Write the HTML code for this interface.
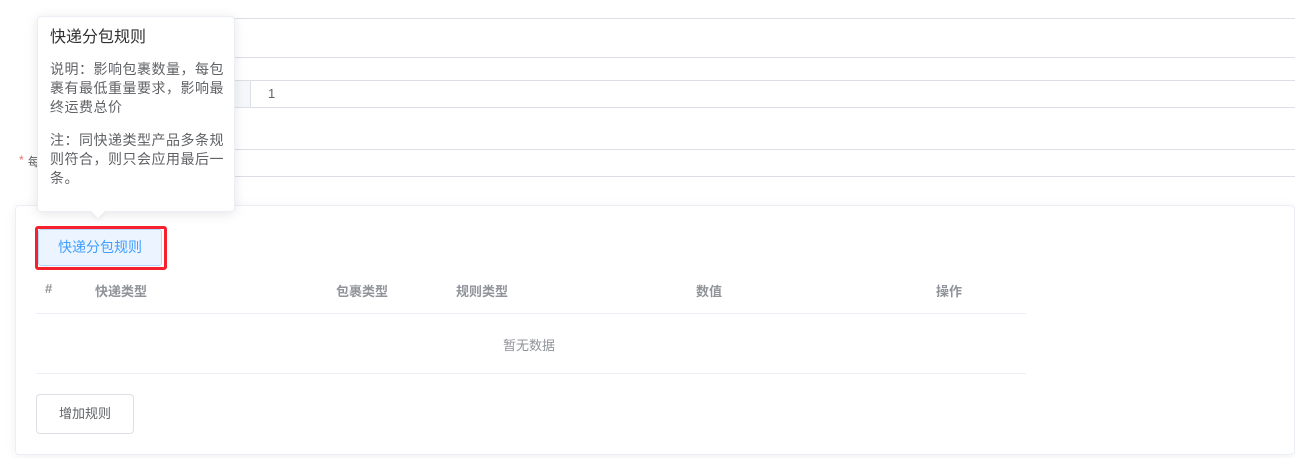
<!DOCTYPE html>
<html><head><meta charset="utf-8"><style>
*{margin:0;padding:0;box-sizing:border-box}
body{width:1295px;height:458px;background:#fff;position:relative;overflow:hidden;font-family:"Liberation Sans","Noto Sans CJK SC",sans-serif;font-size:13px;color:#606266}
.hl{position:absolute;left:230px;right:0;height:1px;background:#dcdfe6}
.abs{position:absolute}
.card{position:absolute;left:15px;top:205px;width:1280px;height:250px;border:1px solid #ebeef5;border-radius:4px;box-shadow:0 2px 12px rgba(0,0,0,.06);background:#fff}
.th{position:absolute;top:281px;font-weight:bold;color:#909399;font-size:13px}
.tip{position:absolute;left:37px;top:16px;width:198px;height:196px;background:#fff;border:1px solid #ebeef5;border-radius:4px;box-shadow:0 2px 12px rgba(0,0,0,.1);padding:10px 0 0 12px;color:#606266;font-size:14px;letter-spacing:0.5px;line-height:19px}
.tip h3{font-size:16px;font-weight:normal;color:#303133;margin-bottom:11px;line-height:22px;letter-spacing:0}
.tip p{width:180px}
.arrow{position:absolute;left:93px;top:206px;width:10px;height:10px;background:#fff;transform:rotate(45deg);box-shadow:2px 2px 4px rgba(0,0,0,.05)}
</style></head><body>
<div class="hl" style="top:18px"></div>
<div class="hl" style="top:57px"></div>
<div class="hl" style="top:80px"></div>
<div class="hl" style="top:107px"></div>
<div class="abs" style="left:230px;top:81px;width:21px;height:26px;background:#f5f7fa;border-right:1px solid #dcdfe6"></div>
<div class="abs" style="left:268px;top:86px;color:#606266">1</div>
<div class="hl" style="top:149px"></div>
<div class="hl" style="top:176px"></div>
<div class="abs" style="left:19px;top:153px;color:#f56c6c;font-size:12px">*</div>
<div class="abs" style="left:28px;top:153px;font-size:12px">每</div>
<div class="card"></div>
<div class="abs" style="left:35px;top:226px;width:132px;height:44px;border:3px solid #f5222d;border-radius:3px"></div>
<div class="abs" style="left:38px;top:229px;width:124px;height:37px;background:#ecf5ff;border:1px solid #b3d8ff;border-radius:3px;color:#409eff;text-align:center;line-height:35px;font-size:14px">快递分包规则</div>
<div class="th" style="left:45px">#</div>
<div class="th" style="left:95px">快递类型</div>
<div class="th" style="left:336px">包裹类型</div>
<div class="th" style="left:456px">规则类型</div>
<div class="th" style="left:696px">数值</div>
<div class="th" style="left:936px">操作</div>
<div class="abs" style="left:36px;top:313px;width:990px;height:1px;background:#ebeef5"></div>
<div class="abs" style="left:503px;top:335px;color:#909399">暂无数据</div>
<div class="abs" style="left:36px;top:373px;width:990px;height:1px;background:#ebeef5"></div>
<div class="abs" style="left:36px;top:394px;width:98px;height:40px;border:1px solid #dcdfe6;border-radius:4px;text-align:center;line-height:38px;color:#606266">增加规则</div>
<div class="tip"><h3>快递分包规则</h3><p>说明：影响包裹数量，每包裹有最低重量要求，影响最终运费总价</p><p style="margin-top:14px">注：同快递类型产品多条规则符合，则只会应用最后一条。</p></div>
<div class="arrow"></div>
</body></html>
